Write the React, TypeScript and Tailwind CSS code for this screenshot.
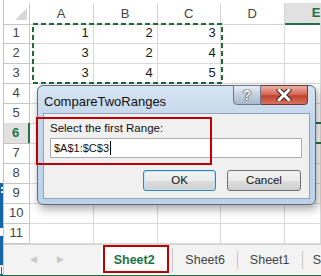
import React from "react";

const COLS = ["A", "B", "C", "D", "E"];
const DATA: Record<number, string[]> = {
  1: ["1", "2", "3", "", ""],
  2: ["3", "2", "4", "", ""],
  3: ["3", "4", "5", "", ""],
};

function HeaderRow() {
  return (
    <div className="grid grid-cols-[26px_64px_64px_63px_64px_1fr] h-[20px]">
      <div className="relative border-r border-b border-[#c6c6c6] bg-white">
        <svg className="absolute left-[11px] top-[5px]" width="12" height="12" viewBox="0 0 12 12">
          <polygon points="12,0 12,12 0,12" fill="#d8d8d8" />
        </svg>
      </div>
      {COLS.map((c) =>
        c === "E" ? (
          <div
            key={c}
            className="flex items-center justify-start pl-[27px] bg-[#e1e1e1] border-b-2 border-[#217346] font-bold text-[#217346] text-[13px] overflow-visible whitespace-nowrap"
          >
            {c}
          </div>
        ) : (
          <div
            key={c}
            className="flex items-center justify-center border-r border-b border-[#d4d4d4] text-[13px] text-[#444]"
          >
            {c}
          </div>
        )
      )}
    </div>
  );
}

function Row({ n }: { n: number }) {
  const vals = DATA[n] || ["", "", "", "", ""];
  const active = n === 6;
  return (
    <div className="grid grid-cols-[26px_64px_64px_63px_64px_1fr] h-[20px]">
      {active ? (
        <div className="flex items-center justify-center bg-[#e1e1e1] border-r-2 border-b border-r-[#217346] border-b-[#c6c6c6] text-[13px] font-bold text-[#217346]">
          {n}
        </div>
      ) : (
        <div className="flex items-center justify-center border-r border-b border-[#c6c6c6] text-[13px] text-[#444]">
          {n}
        </div>
      )}
      {vals.map((v, i) => (
        <div
          key={i}
          className="flex items-center justify-end pr-[4px] border-r border-b border-[#d9d9d9] text-[13px] text-[#1a1a1a]"
        >
          {v}
        </div>
      ))}
    </div>
  );
}

function TabBar() {
  return (
    <div className="flex h-[31px] border-t border-[#d4d4d4] bg-[#f3f3f3] mt-[1px]">
      <div className="w-[97px] flex items-center pl-[26px] gap-[20px] text-[#c8c8c8] text-[9px]">
        <span>◀</span>
        <span>▶</span>
      </div>
      <div className="w-[67px] flex items-center justify-center bg-white font-bold text-[12.5px] text-[#217346]">
        Sheet2
      </div>
      <div className="flex items-center">
        <div className="w-[2px] h-[24px] border-l border-[#c6c6c6] ml-[4px]" />
        <div className="w-[63px] flex items-center justify-center text-[12.5px] text-[#444]">Sheet6</div>
        <div className="w-[1px] h-[18px] bg-[#c6c6c6]" />
        <div className="w-[64px] flex items-center justify-center text-[12.5px] text-[#444]">Sheet1</div>
        <div className="w-[1px] h-[18px] bg-[#c6c6c6]" />
        <div className="pl-[10px] text-[12.5px] text-[#444]">S</div>
      </div>
    </div>
  );
}

function Dialog() {
  return (
    <div className="absolute left-[37px] top-[85px] w-[279px] h-[120px] rounded-[6px] border border-[#5d6b7a] bg-[linear-gradient(180deg,#d6e4f3_0%,#c3d6ec_30%,#bed2ea_100%)] shadow-[2px_4px_10px_rgba(0,0,0,0.35)]">
      <div className="h-[27px] flex items-center pl-[6px] pt-[4px] text-[13px] text-[#111]">
        CompareTwoRanges
      </div>
      {/* caption buttons */}
      <div className="absolute top-[-1px] right-[7px] flex h-[20px]">
        <div className="w-[28px] flex items-center justify-center rounded-bl-[4px] border border-[#6a7a8c] bg-[linear-gradient(180deg,#e6edf5_0%,#c4d0de_50%,#a9b8ca_100%)] text-white font-bold text-[14px] [text-shadow:0_0_1px_#222,0_0_1px_#222,0_0_1px_#222]">
          ?
        </div>
        <div className="w-[47px] flex items-center justify-center rounded-br-[4px] border border-l-0 border-[#6a3a34] bg-[linear-gradient(180deg,#eab0a4_0%,#d66d5b_45%,#c2412e_55%,#d7735f_100%)]">
          <svg width="16" height="12" viewBox="0 0 16 12">
            <path d="M3 1 L13 11 M13 1 L3 11" stroke="#3a2420" strokeWidth="5" strokeLinecap="round" />
            <path d="M3 1 L13 11 M13 1 L3 11" stroke="#ffffff" strokeWidth="3" strokeLinecap="round" />
          </svg>
        </div>
      </div>
      <div className="mx-[5px] h-[86px] border border-[#8fa3b9] bg-[#f0f0f0] px-[6px] pt-[7px]">
        <div className="text-[11.5px] text-[#111] leading-[14px]">Select the first Range:</div>
        <div className="mt-[3px] h-[20px] w-[252px] flex items-center border border-[#abadb3] bg-white pl-[3px] text-[11px] text-[#111]">
          $A$1:$C$3
          <span className="ml-[1px] inline-block w-[1px] h-[14px] bg-black" />
        </div>
        <div className="mt-[12px] flex gap-[11px] pl-[93px]">
          <div className="w-[73px] h-[21px] flex items-center justify-center rounded-[3px] border border-[#3c7fb1] bg-[linear-gradient(180deg,#f2f2f2_0%,#ebebeb_50%,#dddddd_51%,#cfcfcf_100%)] shadow-[inset_0_0_0_1px_#bfe6fb] text-[11.5px] text-[#111]">
            OK
          </div>
          <div className="w-[74px] h-[21px] flex items-center justify-center rounded-[3px] border border-[#707070] bg-[linear-gradient(180deg,#f2f2f2_0%,#ebebeb_50%,#dddddd_51%,#cfcfcf_100%)] text-[11.5px] text-[#111]">
            Cancel
          </div>
        </div>
      </div>
    </div>
  );
}

export default function App() {
  return (
    <div className="relative w-[321px] h-[276px] overflow-hidden bg-white font-['Liberation_Sans',Arial,sans-serif]">
      <div className="flex h-full">
        <div className="w-[6px] flex flex-col border-r border-[#c6c6c6]">
          <div className="h-[183px] bg-white" />
          <div className="flex-1 bg-[#1565a8] relative overflow-hidden">
            <div className="absolute left-[1px] top-[4px] w-[2px] h-[2px] bg-white" />
            <div className="absolute left-[1px] top-[8px] w-[2px] h-[2px] bg-white" />
            <div className="absolute left-[-2px] top-[45px] w-[6px] h-[8px] rounded-b-full bg-white" />
            <div className="absolute left-[-1px] top-[82px] w-[5px] h-[9px] rounded-t-[4px] border-2 border-b-0 border-white" />
          </div>
        </div>
        <div className="flex-1 flex flex-col">
          <div className="h-[3px] bg-white" />
          <HeaderRow />
          {[1, 2, 3, 4, 5, 6, 7, 8, 9, 10, 11].map((n) => (
            <Row key={n} n={n} />
          ))}
          <TabBar />
        </div>
      </div>

      {/* status bar line */}
      <div className="absolute left-0 right-0 bottom-0 h-[1px] bg-[#217346]" />

      {/* active cell E6 */}
      <div className="absolute left-[286px] top-[122px] w-[62px] h-[22px] border-2 border-[#217346]" />

      {/* copy marquee */}
      <svg className="absolute left-[32px] top-[23px]" width="191" height="61" viewBox="0 0 191 61">
        <rect x="1" y="1" width="189" height="59" fill="none" stroke="#1e6b3c" strokeWidth="2" strokeDasharray="5 3" />
      </svg>

      <Dialog />

      {/* annotations */}
      <div className="absolute left-[36px] top-[117px] w-[176px] h-[48px] border-2 border-[#c00000]" />
      <div className="absolute left-[103px] top-[245px] w-[66px] h-[28px] border-2 border-[#c00000]" />
    </div>
  );
}
